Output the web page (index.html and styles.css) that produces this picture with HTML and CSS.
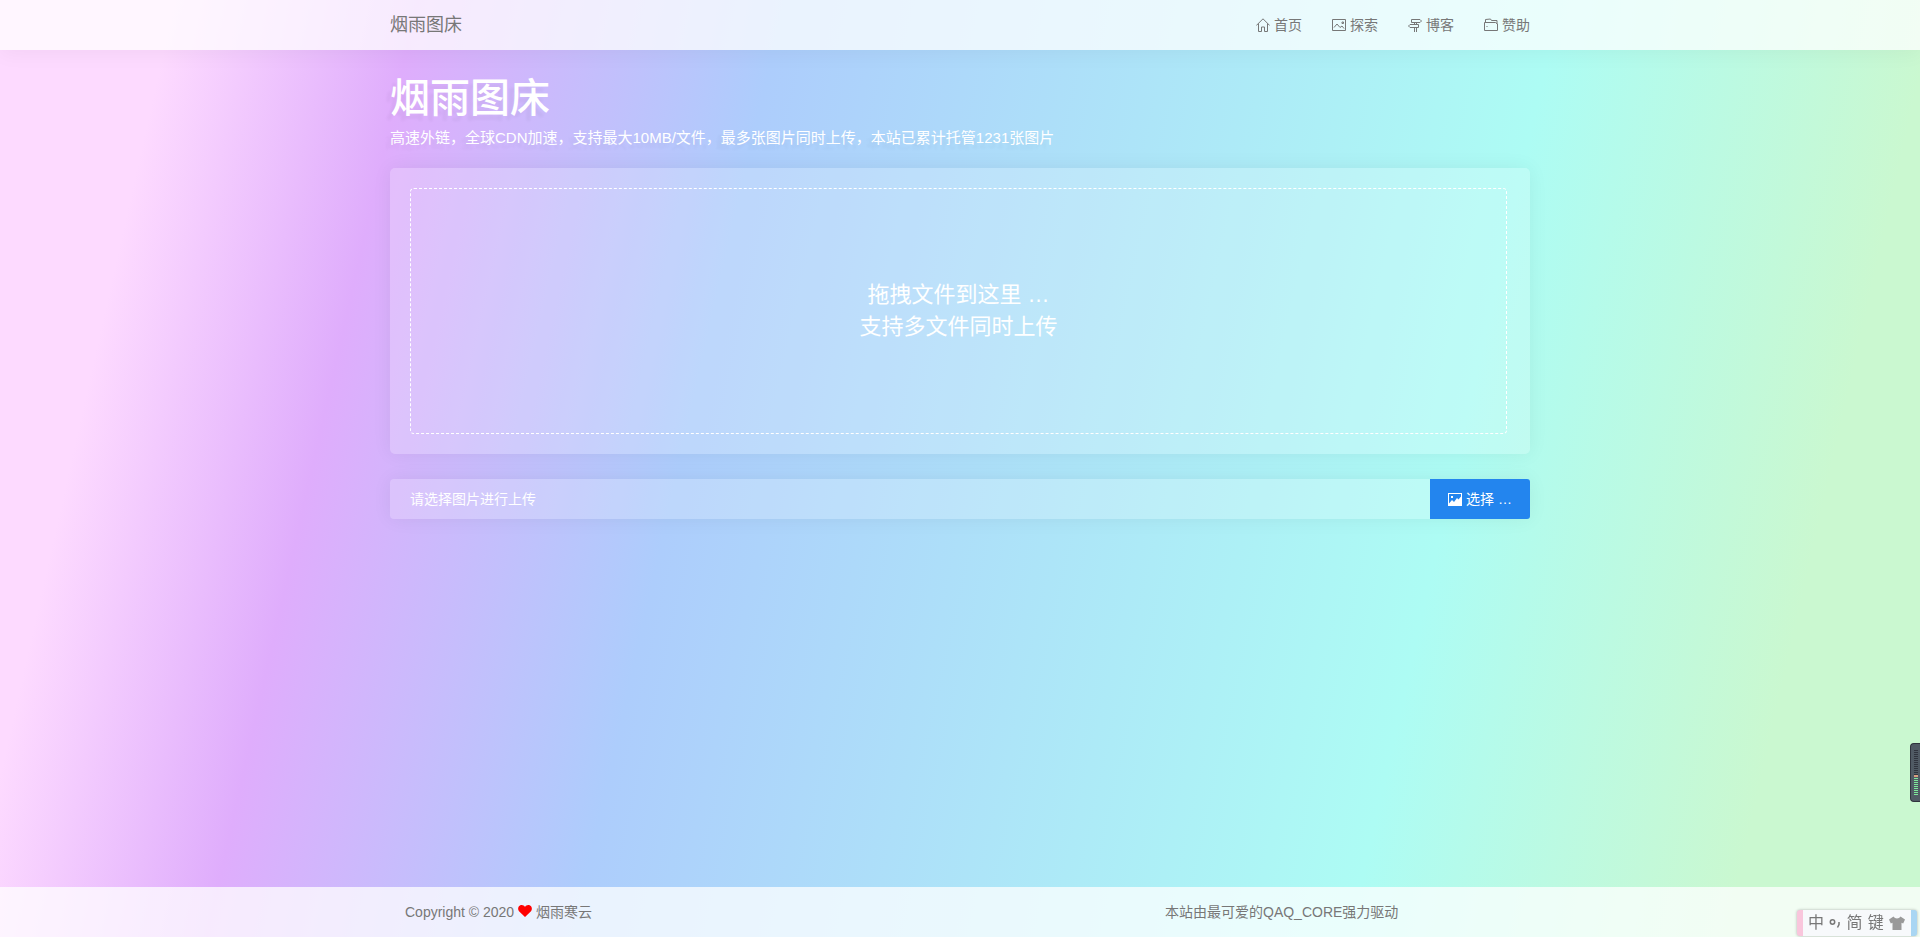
FILE: index.html
```html
<!DOCTYPE html>
<html lang="zh-CN">
<head>
<meta charset="utf-8">
<meta name="viewport" content="width=device-width, initial-scale=1">
<title>烟雨图床</title>
<link rel="stylesheet" href="styles.css">
</head>
<body>
<header class="navbar">
  <div class="container navbar-inner">
    <a class="brand" href="#">烟雨图床</a>
    <nav class="menu">
      <a href="#"><svg class="icon" viewBox="0 0 14 14"><path d="M.3 7.500 7 .8l6.700 6.700M2.500 5.500v8h3V9h3v4.500h3v-8"/></svg>首页</a>
      <a href="#"><svg class="icon" viewBox="0 0 14 14"><path d="M.5 1.500h13v11H.5zM2 9.500l3-3.500 3 3.500 2-1.500 2 2.500M10 4h1.500v1.500H10z"/></svg>探索</a>
      <a href="#"><svg class="icon" viewBox="0 0 14 14"><path d="M3.500 1.500h8.500l1.500 1.500L12 4.500H3.500zM10.500 6.500H2L.5 8 2 9.500h8.500zM6.500 4.500v2M8.500 4.500v2M6.500 9.500V14M8.500 9.500V14"/></svg>博客</a>
      <a href="#"><svg class="icon" viewBox="0 0 14 14"><path d="M.5 4.500h11l2 1.500v6.500H.5zM1.500 4V1.500l5-.5 1 1.500h5.500V6M2.500 8.500h1"/></svg>赞助</a>
    </nav>
  </div>
</header>

<main class="container content">
  <h1 class="title">烟雨图床</h1>
  <p class="subtitle">高速外链，全球CDN加速，支持最大10MB/文件，最多张图片同时上传，本站已累计托管1231张图片</p>
  <section class="preview">
    <div class="dropzone">
      <p>拖拽文件到这里 …<br>支持多文件同时上传</p>
    </div>
  </section>
  <form class="upload">
    <input class="caption" type="text" placeholder="请选择图片进行上传" aria-label="请选择图片进行上传" readonly>
    <button class="browse" type="button"><svg class="icon-solid" viewBox="0 0 14 13"><path fill-rule="evenodd" d="M0 0h14v13H0zM1 1v9.500L4 7l2 2 3-4 1.500 1.500L13 3.500V1zM3 3h2v2H3z"/><path d="M3 3h2v2H3z"/></svg>选择 …</button>
  </form>
</main>

<footer class="footer">
  <div class="container footer-grid">
    <p>Copyright © 2020 <svg class="heart" viewBox="0 0 14 12" role="img" aria-label="love"><path d="M7 12 1 6.200C-.5 4.500 0 1.500 2 .5 4-.4 6 .4 7 2c1-1.600 3-2.400 5-1.500 2 1 2.500 4 1 5.700z"/></svg> 烟雨寒云</p>
    <p class="powered">本站由最可爱的QAQ_CORE强力驱动</p>
  </div>
</footer>

<aside class="meter" aria-hidden="true"><span class="meter-idle"></span><span class="meter-peak"></span><span class="meter-live"></span></aside>

<aside class="ime">
  <span>中</span>
  <svg class="ime-punct" viewBox="0 0 12 12"><circle cx="3.500" cy="5" r="2.200"/><path d="M10 5v2.500L8.500 10.500"/></svg>
  <span>简</span>
  <span>键</span>
  <svg class="ime-shirt" viewBox="0 0 16 14"><path d="M4.500.5c1.500 2.500 5.500 2.500 7 0L16 3.500l-1.800 4-1.700-.8V14h-9V6.700l-1.700.8L0 3.500z"/></svg>
</aside>
</body>
</html>
```
FILE: styles.css
```css
* {
  box-sizing: border-box;
}

body {
  margin: 0;
  min-height: 100vh;
  display: flex;
  flex-direction: column;
  font: 14px/20px "Liberation Sans", "Noto Sans CJK SC", sans-serif;
  color: #777;
  background: linear-gradient(102.7deg, rgb(253, 218, 255) 8.2%, rgb(223, 173, 252) 19.6%, rgb(173, 205, 252) 36.8%, rgb(173, 252, 244) 73.2%, rgb(202, 248, 208) 90.9%);
}

h1,
p {
  margin: 0;
}

a {
  color: inherit;
  text-decoration: none;
}

.container {
  width: 100%;
  max-width: 1140px;
  margin: 0 auto;
}

.navbar {
  background: rgba(255, 255, 255, .75);
  box-shadow: 0 5px 20px rgba(0, 0, 0, .04);
}

.navbar-inner {
  display: flex;
  align-items: center;
  justify-content: space-between;
  min-height: 50px;
}

.brand {
  font-size: 18px;
}

.menu {
  display: flex;
  gap: 30px;
}

.menu a {
  display: flex;
  align-items: center;
  gap: 4px;
}

.icon {
  width: 14px;
  height: 14px;
  fill: none;
  stroke: #777;
}

.content {
  flex: 1;
  padding: 26px 0;
  color: #fff;
}

.title {
  font-size: 40px;
  font-weight: 500;
  line-height: 44px;
  margin-bottom: 8px;
  text-shadow: -5px 5px 3px rgba(0, 0, 0, .04);
}

.subtitle {
  font-size: 15px;
  text-shadow: -5px 5px 3px rgba(0, 0, 0, .04);
}

.preview {
  margin-top: 20px;
  padding: 20px 23px 20px 20px;
  border-radius: 5px;
  background: rgba(255, 255, 255, .2);
  box-shadow: 0 0 20px rgba(0, 0, 0, .06);
}

.dropzone {
  display: grid;
  place-items: center;
  min-height: 246px;
  border: 1px dashed #fff;
  border-radius: 4px;
  font-size: 22px;
  line-height: 32px;
  text-align: center;
}

.upload {
  display: flex;
  margin-top: 25px;
  border-radius: 4px;
  box-shadow: 0 0 20px rgba(0, 0, 0, .06);
}

.caption {
  flex: 1;
  min-width: 0;
  height: 40px;
  padding: 0 20px;
  border: 0;
  border-radius: 4px 0 0 4px;
  background: rgba(255, 255, 255, .2);
  font: inherit;
  color: #fff;
}

.caption::placeholder {
  color: #fff;
  opacity: 1;
}

.browse {
  display: flex;
  align-items: center;
  justify-content: center;
  gap: 4px;
  width: 100px;
  border: 0;
  border-radius: 0 3px 3px 0;
  background: #2385ee;
  font: inherit;
  color: #fff;
}

.icon-solid {
  width: 14px;
  height: 13px;
  fill: #fff;
}

.footer {
  background: rgba(255, 255, 255, .75);
}

.footer-grid {
  display: grid;
  grid-template-columns: repeat(3, 1fr);
  align-items: center;
  min-height: 50px;
}

.footer-grid p {
  padding: 0 15px;
}

.powered {
  grid-column: 3;
}

.heart {
  width: 14px;
  height: 12px;
  fill: #f00;
}

.meter {
  position: fixed;
  right: 0;
  bottom: 135px;
  display: flex;
  flex-direction: column;
  width: 10px;
  height: 59px;
  padding: 6px 2px 6px 3px;
  border: 1px solid #30343e;
  border-right: 0;
  border-radius: 4px 0 0 4px;
  background: #505a64;
}

.meter-idle {
  height: 26px;
  background: repeating-linear-gradient(#30343e 0 1px, #505a64 1px 2px);
}

.meter-peak {
  height: 2px;
  background: #d9a080;
}

.meter-live {
  height: 18px;
  background: repeating-linear-gradient(#505a64 0 1px, #7de89a 1px 2px);
}

.ime {
  position: fixed;
  right: 3px;
  bottom: 1px;
  display: flex;
  align-items: center;
  justify-content: space-between;
  width: 120px;
  height: 26px;
  padding: 0 6px 0 5px;
  border-left: 6px solid #f9c6dc;
  border-right: 6px solid #a9d6f3;
  border-radius: 3px;
  background: #f7f9fb;
  box-shadow: 0 0 3px rgba(0, 0, 0, .3);
  font-size: 16px;
}

.ime-punct {
  width: 12px;
  height: 12px;
  fill: none;
  stroke: #777;
  stroke-width: 1.5;
}

.ime-shirt {
  width: 16px;
  height: 14px;
  fill: #999;
}
```
